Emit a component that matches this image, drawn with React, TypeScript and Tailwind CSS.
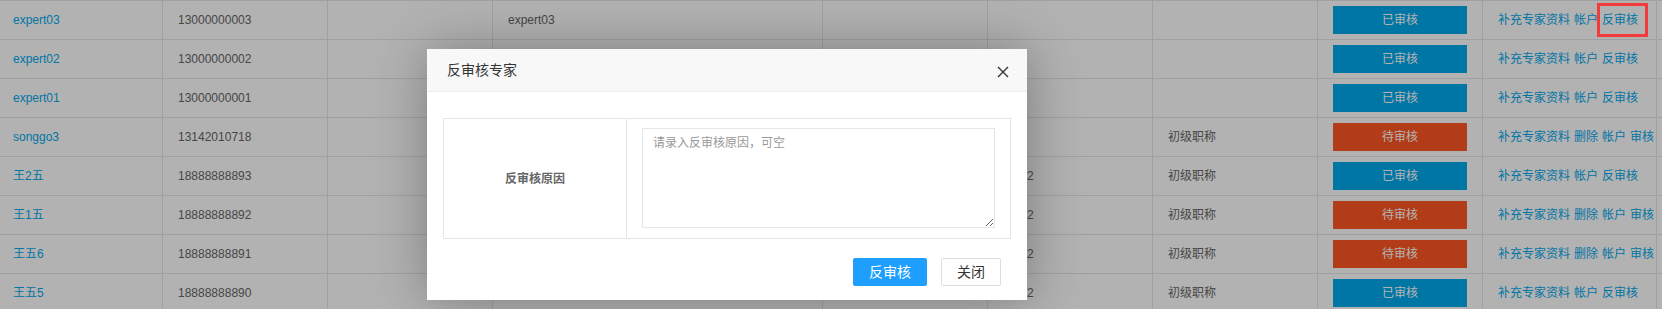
import React from "react";

type Row = {
  name: string;
  phone: string;
  account: string;
  note: string;
  title: string;
  audited: boolean;
};

const rows: Row[] = [
  { name: "expert03", phone: "13000000003", account: "expert03", note: "", title: "", audited: true },
  { name: "expert02", phone: "13000000002", account: "", note: "", title: "", audited: true },
  { name: "expert01", phone: "13000000001", account: "", note: "", title: "", audited: true },
  { name: "songgo3", phone: "13142010718", account: "", note: "", title: "初级职称", audited: false },
  { name: "王2五", phone: "18888888893", account: "", note: "测试2", title: "初级职称", audited: true },
  { name: "王1五", phone: "18888888892", account: "", note: "测试2", title: "初级职称", audited: false },
  { name: "王五6", phone: "18888888891", account: "", note: "测试2", title: "初级职称", audited: false },
  { name: "王五5", phone: "18888888890", account: "", note: "测试2", title: "初级职称", audited: true },
];

const cell = "flex items-center px-[15px] border-r border-[#e6e6e6] whitespace-nowrap overflow-hidden";

function ExpertRow({ row }: { row: Row }) {
  return (
    <div className="grid h-[39px] grid-cols-[163px_165px_165px_330px_165px_165px_165px_165px_174px] border-t border-[#e6e6e6]">
      <div className="flex items-center overflow-hidden whitespace-nowrap border-r border-[#e6e6e6] pl-[13px]">
        <a className="text-[#01AAED]">{row.name}</a>
      </div>
      <div className={cell}>{row.phone}</div>
      <div className={cell}></div>
      <div className={cell}>{row.account}</div>
      <div className={cell}></div>
      <div className={cell}>{row.note}</div>
      <div className={cell}>{row.title}</div>
      <div className={cell}>
        <span
          className={`flex h-[28px] w-full items-center justify-center text-white ${
            row.audited ? "bg-[#01AAED]" : "bg-[#FF5722]"
          }`}
        >
          {row.audited ? "已审核" : "待审核"}
        </span>
      </div>
      <div className={`${cell} gap-[4px] text-[#01AAED]`}>
        <a>补充专家资料</a>
        {!row.audited && <a>删除</a>}
        <a>帐户</a>
        <a>{row.audited ? "反审核" : "审核"}</a>
      </div>
    </div>
  );
}

export default function App() {
  return (
    <div className="relative h-[309px] w-[1662px] overflow-hidden bg-white font-['Liberation_Sans','Noto_Sans_CJK_SC',sans-serif] text-[12px] text-[#666]">
      <div className="flex flex-col">
        {rows.map((row) => (
          <ExpertRow key={row.phone} row={row} />
        ))}
      </div>

      {/* shade */}
      <div className="absolute inset-0 bg-black/30" />

      {/* annotation */}
      <div className="absolute left-[1597px] top-[3px] h-[34px] w-[51px] border-[3px] border-[#f43b3b]" />

      {/* dialog */}
      <div className="absolute left-[427px] top-[49px] w-[600px] bg-white shadow-[1px_1px_50px_rgba(0,0,0,0.3)]">
        <div className="relative h-[43px] border-b border-[#eee] bg-[#F8F8F8] pl-[20px] text-[14px] leading-[42px] text-[#333]">
          反审核专家
          <button type="button" className="absolute right-[18px] top-[17px] h-[12px] w-[12px]">
            <svg viewBox="0 0 12 12" className="h-[12px] w-[12px]">
              <path d="M1 1 L11 11 M11 1 L1 11" stroke="#333" strokeWidth="1.4" fill="none" />
            </svg>
          </button>
        </div>

        <div className="px-[16px] pt-[26px]">
          <div className="flex border border-[#e6e6e6]">
            <div className="flex w-[183px] items-center justify-center border-r border-[#e6e6e6] font-bold text-[#666]">
              反审核原因
            </div>
            <div className="flex-1 px-[15px] pb-[10px] pt-[9px]">
              <textarea
                placeholder="请录入反审核原因，可空"
                className="block h-[100px] w-full border border-[#e6e6e6] px-[10px] py-[6px] text-[12px] leading-[16px] text-[#333] outline-none placeholder:text-[#999]"
              />
            </div>
          </div>
        </div>

        <div className="flex justify-end gap-[14px] pb-[14px] pr-[26px] pt-[19px] text-[14px]">
          <a className="flex h-[28px] items-center rounded-[2px] border border-[#1E9FFF] bg-[#1E9FFF] px-[15px] text-white">
            反审核
          </a>
          <a className="flex h-[28px] items-center rounded-[2px] border border-[#dedede] bg-white px-[15px] text-[#333]">
            关闭
          </a>
        </div>
      </div>
    </div>
  );
}
